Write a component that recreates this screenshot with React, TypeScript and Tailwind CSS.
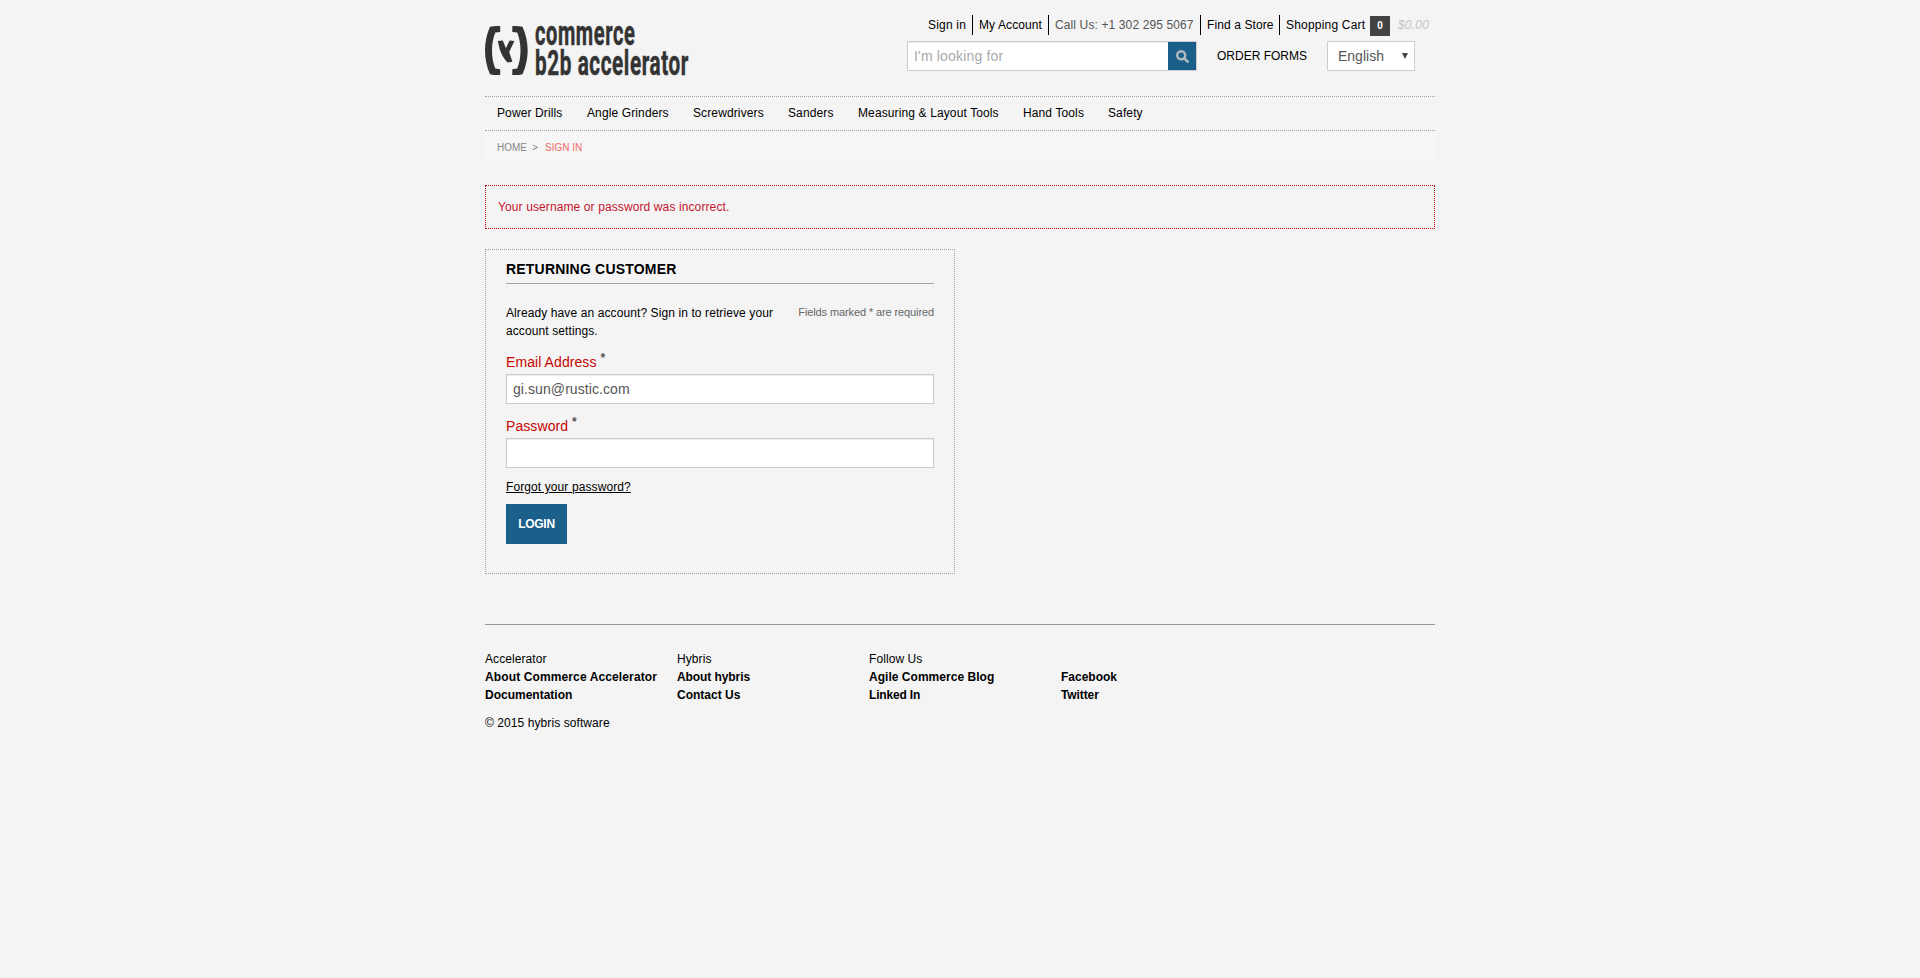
import React from "react";

const categories = [
  { label: "Power Drills", width: "w-[90px]" },
  { label: "Angle Grinders", width: "w-[106px]" },
  { label: "Screwdrivers", width: "w-[95px]" },
  { label: "Sanders", width: "w-[70px]" },
  { label: "Measuring & Layout Tools", width: "w-[165px]" },
  { label: "Hand Tools", width: "w-[85px]" },
  { label: "Safety", width: "w-[60px]" },
];

const footerColumns = [
  {
    title: "Accelerator",
    links: [
      { label: "About Commerce Accelerator", tracking: "tracking-[0.12px]" },
      { label: "Documentation", tracking: "tracking-normal" },
    ],
  },
  {
    title: "Hybris",
    links: [
      { label: "About hybris", tracking: "tracking-[-0.08px]" },
      { label: "Contact Us", tracking: "tracking-normal" },
    ],
  },
  {
    title: "Follow Us",
    links: [
      { label: "Agile Commerce Blog", tracking: "tracking-[0.03px]" },
      { label: "Linked In", tracking: "tracking-[-0.17px]" },
    ],
  },
  {
    title: "",
    links: [
      { label: "Facebook", tracking: "tracking-normal" },
      { label: "Twitter", tracking: "tracking-[-0.1px]" },
    ],
  },
];

function Logo() {
  return (
    <svg width="210" height="86" viewBox="0 -10 210 86" className="mt-[10px] block shrink-0 fill-[#333]">
      <path d="M15.2 6.2C12 6 8.500 6 5 6.800C1.800 14 0 22 0 30.500C0 39 1.800 47 5 54.300C8.500 55.200 12 55.200 15.200 55V49.200L10.300 48.600C8 43 7 37 7 30.500C7 24 8 18 10.300 12.500L15.200 12Z" />
      <path d="M27.300 6.200C30.500 6 34 6 37.500 6.800C40.700 14 42.700 22 42.700 30.500C42.700 39 40.700 47 37.500 54.300C34 55.200 30.500 55.200 27.300 55V49.200L32.200 48.600C34.500 43 35.500 37 35.500 30.500C35.500 24 34.500 18 32.200 12.500L27.300 12Z" />
      <path d="M12.800 21L17.800 20.600L20.900 28.300L24.600 20.600L29.400 21L24.200 32L27.400 41.700L22.500 42.500C19 38.500 16 34 14.800 29.500Z" />
      <g fontFamily="Roboto, sans-serif" fontWeight="700" fontSize="34.500" letterSpacing="1" stroke="#333" strokeWidth="0.5">
        <text x="50" y="24.700" textLength="100.300" lengthAdjust="spacingAndGlyphs">commerce</text>
        <text x="50" y="54.700" textLength="154" lengthAdjust="spacingAndGlyphs">b2b accelerator</text>
      </g>
    </svg>
  );
}

function TopLinks() {
  return (
    <div className="flex h-5 items-start whitespace-nowrap pl-[21px] leading-[20px]">
      <a className="w-[44px] tracking-[0.2px]">Sign in</a>
      <a className="w-[76px] border-l border-black pl-[6px] tracking-[0.1px]">My Account</a>
      <span className="w-[152px] border-l border-black pl-[6px] tracking-[0.12px] text-[#555]">Call Us: +1 302 295 5067</span>
      <a className="w-[79px] border-l border-black pl-[6px] tracking-[0.1px]">Find a Store</a>
      <a className="w-[91px] border-l border-black pl-[6px] tracking-[0.2px]">Shopping Cart</a>
      <span className="mt-px h-5 w-5 bg-[#444] text-center text-[10px] font-bold text-white">0</span>
      <span className="ml-[8px] italic tracking-[0.2px] text-[#c3c3c3]">$0.00</span>
    </div>
  );
}

function SearchBar() {
  return (
    <div className="mt-[6px] flex h-[30px]">
      <div className="flex h-[30px] w-[290px] border border-[#ccc] bg-white shadow-[inset_0_1px_1px_rgba(0,0,0,0.075)]">
        <div className="flex-1 pl-[6px] text-[14px] leading-[28px] tracking-[0.17px] text-[#a9a9a9]">I'm looking for</div>
        <button className="flex w-[28px] items-center justify-center bg-[#1a608b]">
          <svg width="13" height="13" viewBox="0 0 13 13" fill="none" stroke="#b3b9bd">
            <circle cx="5.200" cy="5.200" r="4" strokeWidth="2.400" />
            <path d="M8.400 8.400L11.600 11.600" strokeWidth="2.700" strokeLinecap="round" />
          </svg>
        </button>
      </div>
      <a className="ml-5 w-[110px] leading-[30px]">ORDER FORMS</a>
      <div className="flex h-[30px] w-[88px] justify-between border border-[#ccc] bg-white pl-[10px] pr-[6px] text-[14px] leading-[28px] text-[#555]">
        <span>English</span>
        <svg width="6" height="6" viewBox="0 0 6 6" className="mt-[11px] fill-[#444]">
          <path d="M0 0H6L3 6Z" />
        </svg>
      </div>
    </div>
  );
}

function Field({ label, value }: { label: string; value: string }) {
  return (
    <div className="mb-3">
      <div className="flex h-[22px] text-[14px] leading-[20px] tracking-[0.08px] text-[#c90400]">
        <span>{label}</span>
        <span className="ml-[4px] -mt-[4px] text-[12px] font-bold text-[#555]">*</span>
      </div>
      <div className="h-[30px] border border-[#ccc] bg-white pl-[6px] text-[14px] leading-[28px] tracking-[0.08px] text-[#555] shadow-[inset_0_1px_1px_rgba(0,0,0,0.075)]">
        {value}
      </div>
    </div>
  );
}

export default function App() {
  return (
    <div className="min-h-[978px] bg-[#f4f4f4] font-['Liberation_Sans',Arial,sans-serif] text-[12px] leading-[18px] text-black">
      <div className="mx-auto w-[950px]">
        <header className="flex h-[96px] justify-between">
          <Logo />
          <div className="w-[528px] pt-[15px]">
            <TopLinks />
            <SearchBar />
          </div>
        </header>
        <nav className="flex h-[35px] border-y border-dotted border-[#a0a0a0] pl-3 leading-[32px] tracking-[0.12px]">
          {categories.map((c) => (
            <a key={c.label} className={`${c.width} whitespace-nowrap`}>{c.label}</a>
          ))}
        </nav>
        <div className="flex h-[36px] bg-[#f6f6f6] pl-3 text-[10px] leading-[33px] text-[#888]">
          <span className="w-[35px]">HOME</span>
          <span className="w-[13px]">&gt;</span>
          <span className="text-[#f26868]">SIGN IN</span>
        </div>
        <div className="mt-[18px] h-[44px] border border-dotted border-[#c90400] pl-3 leading-[42px] tracking-[0.11px] text-[#c5152f]">
          Your username or password was incorrect.
        </div>
        <section className="mt-5 h-[325px] w-[470px] border border-dotted border-[#a0a0a0] px-5">
          <h2 className="h-[34px] border-b border-[#a0a0a0] pt-[9px] text-[14px] font-bold leading-[20px] tracking-[0.2px]">
            RETURNING CUSTOMER
          </h2>
          <div className="mt-[20px] flex justify-between">
            <p className="w-[275px] tracking-[0.1px]">Already have an account? Sign in to retrieve your account settings.</p>
            <p className="whitespace-nowrap text-[11px] leading-[17px] tracking-[-0.11px] text-[#666]">Fields marked * are required</p>
          </div>
          <div className="mt-[12px]">
            <Field label="Email Address" value="gi.sun@rustic.com" />
            <Field label="Password" value="" />
          </div>
          <a className="-mt-[2px] block tracking-[0.1px] underline">Forgot your password?</a>
          <button className="mt-[8px] block h-10 w-[61px] bg-[#1a608b] text-center font-bold tracking-[-0.3px] text-white">LOGIN</button>
        </section>
        <footer className="mt-[50px] border-t border-[#999] pt-[25px]">
          <div className="flex">
            {footerColumns.map((col, i) => (
              <div key={i} className="w-[192px] whitespace-nowrap">
                <div className="h-[18px] tracking-[0.08px]">{col.title}</div>
                {col.links.map((l) => (
                  <a key={l.label} className={`block font-bold ${l.tracking}`}>{l.label}</a>
                ))}
              </div>
            ))}
          </div>
          <p className="mt-[10px] tracking-[0.08px]">© 2015 hybris software</p>
        </footer>
      </div>
    </div>
  );
}
